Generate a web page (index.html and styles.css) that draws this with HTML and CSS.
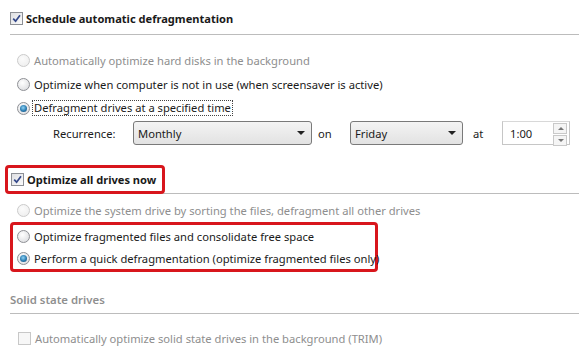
FILE: index.html
```html
<!DOCTYPE html>
<html>

<head>
    <meta charset="UTF-8">
    <title>Optimize Drives - Schedule</title>
    <link rel="stylesheet" href="styles.css">
</head>

<body>
    <div class="page">
        <div class="group-head first">
            <span class="check on">
                <svg width="11" height="11" viewBox="0 0 11 11"><path d="M2.2 5.6 L4.6 8.2 L9 2.2" fill="none" stroke="#34488a" stroke-width="1.7"/></svg>
            </span>
            <span class="head-text">Schedule automatic defragmentation</span>
        </div>

        <div class="options top">
            <div class="opt disabled"><span class="radio"></span>Automatically optimize hard disks in the background</div>
            <div class="opt"><span class="radio"></span>Optimize when computer is not in use (when screensaver is active)</div>
            <div class="opt"><span class="radio on"></span><span class="focus">Defragment drives at a specified time</span></div>
            <div class="schedule">
                <span class="field-label">Recurrence:</span>
                <div class="select monthly">Monthly<span class="arrow"></span></div>
                <span class="word on-word">on</span>
                <div class="select friday">Friday<span class="arrow"></span></div>
                <span class="word at-word">at</span>
                <div class="time">
                    <span>1:00</span>
                    <div class="spin">
                        <span class="up"></span>
                        <span class="down"></span>
                    </div>
                </div>
            </div>
        </div>

        <div class="group-head second">
            <div class="marked head-box">
                <span class="check on">
                    <svg width="11" height="11" viewBox="0 0 11 11"><path d="M2.2 5.6 L4.6 8.2 L9 2.2" fill="none" stroke="#34488a" stroke-width="1.7"/></svg>
                </span>
                <span class="head-text">Optimize all drives now</span>
            </div>
        </div>

        <div class="options bottom">
            <div class="opt disabled"><span class="radio"></span>Optimize the system drive by sorting the files, defragment all other drives</div>
            <div class="marked list-box">
                <div class="opt"><span class="radio"></span>Optimize fragmented files and consolidate free space</div>
                <div class="opt"><span class="radio on"></span>Perform a quick defragmentation (optimize fragmented files only)</div>
            </div>
        </div>

        <div class="group-head plain">Solid state drives</div>

        <div class="opt check-row disabled"><span class="check"></span>Automatically optimize solid state drives in the background (TRIM)</div>
    </div>
</body>

</html>
```

FILE: styles.css
```css
body {
    font-family: "Noto Sans", sans-serif;
    font-size: 11.2px;
    color: #1a1a1a;
    background: #fff;
    margin: 0;
}

.page {
    padding-left: 10px;
    width: 569px;
}

/* group headers with the rule under them */
.group-head {
    display: flex;
    align-items: center;
    border-bottom: 1px solid #bcbcbc;
    box-sizing: border-box;
}

.group-head.first {
    height: 35px;
    padding-top: 3px;
}

.group-head.second {
    margin-top: 19px;
    height: 29px;
}

.group-head.plain {
    margin-top: 14px;
    height: 28px;
    color: #8f8f8f;
    font-weight: 600;
    font-size: 11.4px;
}

.head-text {
    font-weight: bold;
    font-size: 11.1px;
}

.marked {
    border: 3px solid #d8161c;
    border-radius: 4px;
    box-sizing: border-box;
}

.head-box {
    display: flex;
    align-items: center;
    margin-left: -5px;
    height: 29px;
    margin-bottom: -1px;
    padding: 0 6px 0 3px;
    align-self: flex-start;
}

.list-box {
    width: 368px;
    height: 50px;
}

.list-box .opt {
    height: 22px;
}

.list-box .radio {
    margin-left: 4px;
}

/* checkbox */
.check {
    width: 11px;
    height: 11px;
    border: 1px solid #8c8f95;
    background: linear-gradient(135deg, #dedfe2, #fbfbfb);
    margin-right: 3px;
    display: flex;
    flex-shrink: 0;
}

.disabled .check {
    border-color: #c8c8c8;
    background: #f7f7f7;
}

/* radios */
.options.top {
    margin-top: 13px;
}

.options.bottom {
    margin-top: 4px;
}

.opt {
    display: flex;
    align-items: center;
    height: 24px;
    white-space: nowrap;
}

.opt.disabled {
    color: #8e8e8e;
}

.radio {
    width: 11px;
    height: 11px;
    border-radius: 50%;
    border: 1px solid #8e9095;
    background: radial-gradient(circle at 40% 35%, #ffffff, #d6d7da);
    margin-left: 7px;
    margin-right: 4px;
    position: relative;
    flex-shrink: 0;
}

.disabled .radio {
    border-color: #cbcbcb;
    background: radial-gradient(circle at 40% 35%, #fbfbfb, #ececec);
}

.radio.on::after {
    content: "";
    position: absolute;
    left: 2px;
    top: 2px;
    width: 7px;
    height: 7px;
    border-radius: 50%;
    background: radial-gradient(circle at 45% 40%, #8fd3f5, #2a7bb0 55%, #17466e);
}

.focus {
    border: 1px dotted #444;
    padding: 0 1px;
    margin-left: -2px;
    line-height: 14px;
}

/* recurrence row */
.schedule {
    display: flex;
    align-items: center;
    height: 26px;
    padding-left: 43px;
}

.field-label {
    width: 80px;
}

.select {
    height: 24px;
    border: 1px solid #7a7a7a;
    border-radius: 3px;
    background: linear-gradient(#f4f4f4, #e2e2e2);
    box-sizing: border-box;
    padding-left: 4px;
    display: flex;
    align-items: center;
    position: relative;
}

.select.monthly {
    width: 179px;
}

.select.friday {
    width: 113px;
}

.arrow {
    position: absolute;
    right: 6px;
    top: 9px;
    border-left: 4px solid transparent;
    border-right: 4px solid transparent;
    border-top: 4px solid #222;
}

.on-word {
    width: 32px;
    margin-left: 6px;
}

.at-word {
    width: 29px;
    margin-left: 10px;
}

.time {
    width: 68px;
    height: 24px;
    box-sizing: border-box;
    border: 1px solid #c6c6c6;
    border-top-color: #d8d8d8;
    display: flex;
    align-items: center;
    padding-left: 7px;
    position: relative;
}

.spin {
    position: absolute;
    right: 2px;
    top: 1px;
    width: 14px;
    display: flex;
    flex-direction: column;
    gap: 1px;
}

.spin span {
    height: 9px;
    border: 1px solid #c9c9c9;
    background: #f5f5f5;
    position: relative;
}

.spin span::after {
    content: "";
    position: absolute;
    left: 4px;
    border-left: 3px solid transparent;
    border-right: 3px solid transparent;
}

.spin .up::after {
    top: 3px;
    border-bottom: 3px solid #777;
}

.spin .down::after {
    top: 3px;
    border-top: 3px solid #777;
}

/* solid state row */
.check-row {
    margin-top: 12px;
}

.check-row .check {
    margin-left: 8px;
    margin-right: 4px;
}
```
